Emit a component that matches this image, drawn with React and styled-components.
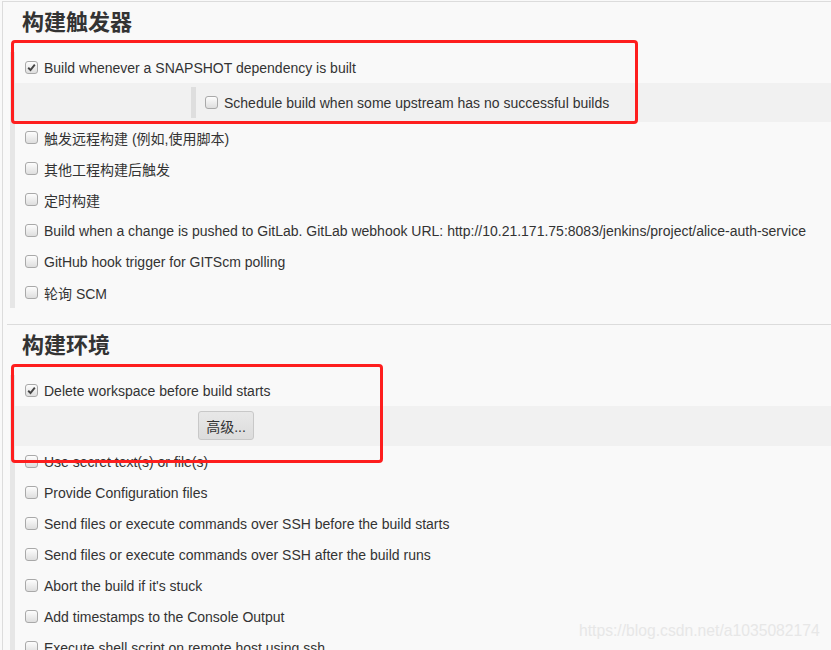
import React from 'react';
import styled, { createGlobalStyle } from 'styled-components';

const GlobalStyle = createGlobalStyle`
    html, body {
        margin: 0;
        padding: 0;
        background: #f9f9f9;
        overflow: hidden;
    }
    body {
        font-family: "Liberation Sans", Arial, "Noto Sans CJK SC", sans-serif;
        font-size: 14px;
        color: #333;
    }
`

const Page = styled.div`
    position: relative;
    width: 831px;
    height: 650px;
    padding: 1px 0 0 2px;
    box-sizing: border-box;
    overflow: hidden;
`

const Panel = styled.div`
    border-left: 1px solid #dcdcdc;
    border-top: 1px solid #dcdcdc;
    height: 100%;
`

const Section = styled.section`
    margin-left: ${p => (p.divided ? '4px' : '0')};
    border-top: ${p => (p.divided ? '1px solid #dcdcdc' : 'none')};
    padding-bottom: 16px;
`

const SectionTitle = styled.h2`
    margin: 0;
    height: 50px;
    padding: 8px 0 0 ${p => (p.divided ? '15px' : '19px')};
    box-sizing: border-box;
    font-size: 22px;
    line-height: 26px;
    font-weight: bold;
    color: #333;
    font-family: "Liberation Sans", Arial, "Noto Sans CJK SC", sans-serif;
`

const SectionBody = styled.div`
    margin-left: ${p => (p.divided ? '3px' : '7px')};
    border-left: 5px solid #e6e6e6;
`

const Row = styled.label`
    display: flex;
    align-items: center;
    height: 31px;
    padding-left: 10px;
    white-space: nowrap;
`

const Box = styled.span`
    display: inline-flex;
    align-items: center;
    justify-content: center;
    width: 11px;
    height: 11px;
    margin-right: 6px;
    border: 1px solid #a9a9a9;
    border-radius: 3px;
    background: linear-gradient(#fdfdfd, #dedede);
    flex: none;
`

const Band = styled.div`
    background: #f1f1f1;
    padding: ${p => p.pad};
`

const Nested = styled.div`
    margin-left: 176px;
    border-left: 5px solid #dedede;
    ${Row} {
        padding-left: 9px;
    }
`

const AdvancedButton = styled.button`
    margin-left: 183px;
    height: 29px;
    width: 56px;
    padding: 0;
    border: 1px solid #c8c8c8;
    border-radius: 3px;
    background: linear-gradient(#e8e8e8, #dcdcdc);
    color: #333;
    font-size: 14px;
    font-family: "Liberation Sans", Arial, "Noto Sans CJK SC", sans-serif;
`

const RedMark = styled.div`
    position: absolute;
    left: ${p => p.left}px;
    top: ${p => p.top}px;
    width: ${p => p.width}px;
    height: ${p => p.height}px;
    box-sizing: border-box;
    border: 3px solid #fe1e1e;
    border-radius: 4px;
    pointer-events: none;
`

const Watermark = styled.div`
    position: absolute;
    left: 579px;
    top: 622px;
    font-size: 15.7px;
    color: #e7e7e7;
    font-family: "Liberation Sans", Arial, sans-serif;
`

const Check = ({ checked }) => (
    <Box>
        {checked && (
            <svg width="9" height="9" viewBox="0 0 9 9">
                <path d="M1.2 4.8 L3.5 7 L7.8 1.6" fill="none" stroke="#444" strokeWidth="1.9" />
            </svg>
        )}
    </Box>
)

const Option = ({ checked, children }) => (
    <Row>
        <Check checked={checked} />
        {children}
    </Row>
)

const triggers = [
    '触发远程构建 (例如,使用脚本)',
    '其他工程构建后触发',
    '定时构建',
    'Build when a change is pushed to GitLab. GitLab webhook URL: http://10.21.171.75:8083/jenkins/project/alice-auth-service',
    'GitHub hook trigger for GITScm polling',
    '轮询 SCM',
]

const environment = [
    'Use secret text(s) or file(s)',
    'Provide Configuration files',
    'Send files or execute commands over SSH before the build starts',
    'Send files or execute commands over SSH after the build runs',
    "Abort the build if it's stuck",
    'Add timestamps to the Console Output',
    'Execute shell script on remote host using ssh',
]

const App = () => (
    <Page>
        <GlobalStyle />
        <Panel>
            <Section>
                <SectionTitle>构建触发器</SectionTitle>
                <SectionBody>
                    <Option checked>Build whenever a SNAPSHOT dependency is built</Option>
                    <Band pad="4px 0">
                        <Nested>
                            <Option>Schedule build when some upstream has no successful builds</Option>
                        </Nested>
                    </Band>
                    {triggers.map(t => <Option key={t}>{t}</Option>)}
                </SectionBody>
            </Section>
            <Section divided>
                <SectionTitle divided>构建环境</SectionTitle>
                <SectionBody divided>
                    <Option checked>Delete workspace before build starts</Option>
                    <Band pad="5px 0 6px">
                        <AdvancedButton>高级...</AdvancedButton>
                    </Band>
                    {environment.map(t => <Option key={t}>{t}</Option>)}
                </SectionBody>
            </Section>
        </Panel>
        <RedMark left={11} top={40} width={627} height={84} />
        <RedMark left={11} top={364} width={372} height={99} />
        <Watermark>https://blog.csdn.net/a1035082174</Watermark>
    </Page>
)

export default App;
